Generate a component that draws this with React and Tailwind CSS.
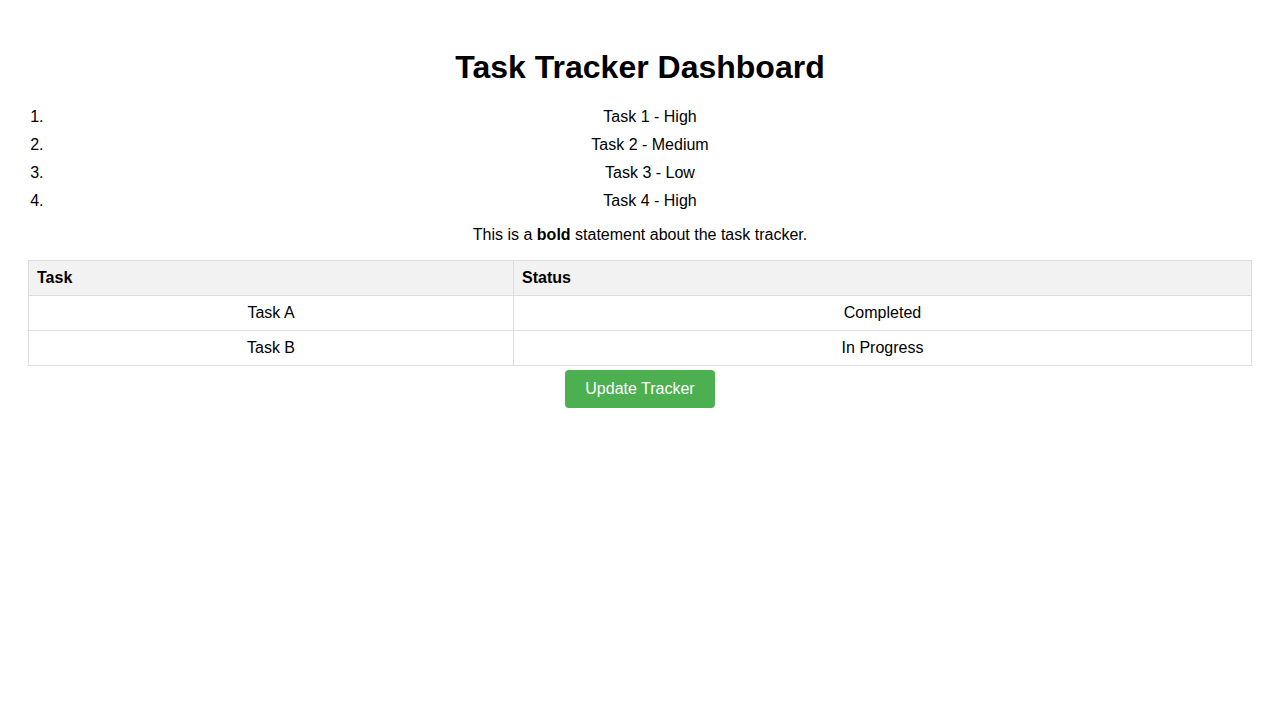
const tasks = ['Task 1 - High', 'Task 2 - Medium', 'Task 3 - Low', 'Task 4 - High']

const rows = [
  { task: 'Task A', status: 'Completed' },
  { task: 'Task B', status: 'In Progress' },
]

const App = () => (
  <div className="min-h-screen bg-white p-[28px] text-base text-black font-['Liberation_Sans',Arial,sans-serif]">
    <h1 className="mt-[21px] mb-[22px] text-center text-[32px] leading-[37px] font-bold">Task Tracker Dashboard</h1>

    <ol className="list-decimal pl-[20px] mb-4">
      {tasks.map((t) => (
        <li key={t} className="mb-[10px] text-center leading-[18px]">{t}</li>
      ))}
    </ol>

    <p className="mt-[16px] mb-[16px] text-center leading-[18px]">
      This is a <b>bold</b> statement about the task tracker.
    </p>

    <table className="w-full border-collapse">
      <thead>
        <tr className="bg-[#f2f2f2]">
          <th className="w-[485px] border border-[#dddddd] px-2 py-2 text-left font-bold leading-[18px]">Task</th>
          <th className="border border-[#dddddd] px-2 py-2 text-left font-bold leading-[18px]">Status</th>
        </tr>
      </thead>
      <tbody>
        {rows.map((r) => (
          <tr key={r.task}>
            <td className="border border-[#dddddd] px-2 py-2 text-center leading-[18px]">{r.task}</td>
            <td className="border border-[#dddddd] px-2 py-2 text-center leading-[18px]">{r.status}</td>
          </tr>
        ))}
      </tbody>
    </table>

    <div className="mt-[4px] flex justify-center">
      <button type="button" className="rounded-[4px] bg-[#4caf50] px-5 py-[10px] text-base leading-[18px] text-white">
        Update Tracker
      </button>
    </div>
  </div>
)

export default App
